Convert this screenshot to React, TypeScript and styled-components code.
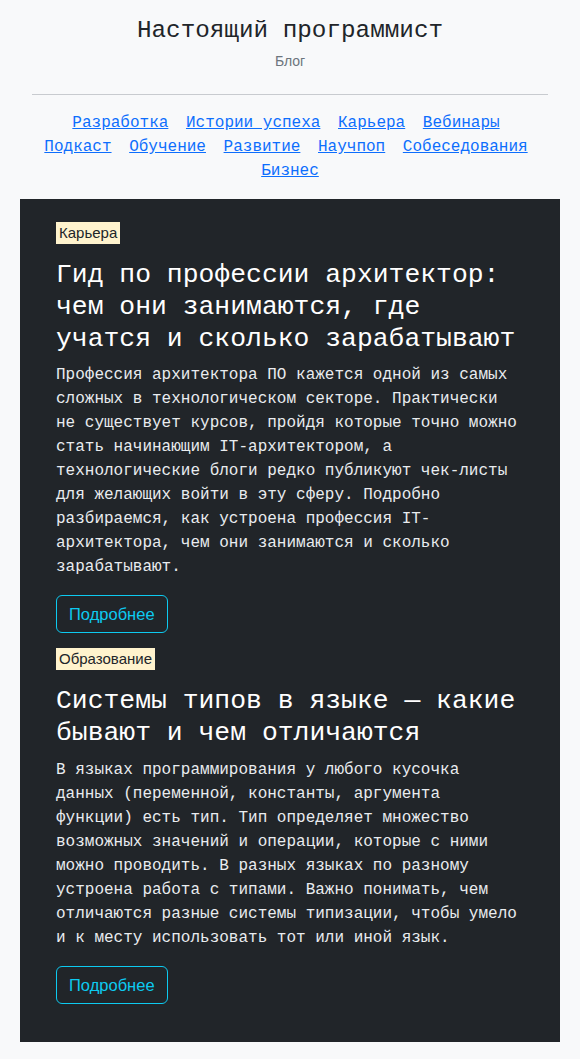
import { createGlobalStyle, styled } from 'styled-components';

const mono = `'Liberation Mono', 'DejaVu Sans Mono', monospace`;
const sans = `'Liberation Sans', Arial, sans-serif`;

const GlobalStyle = createGlobalStyle`
  * { box-sizing: border-box; }
  body {
    margin: 0;
    background-color: #f8f9fa;
    color: #212529;
    font-family: ${mono};
  }
`;

const Header = styled.header`
  padding: 16px 32px 0;
  text-align: center;
`;

const SiteTitle = styled.h1`
  margin: 0;
  font-family: ${mono};
  font-size: 24.3px;
  font-weight: 400;
  line-height: 1.2;
  color: #212529;
`;

const SiteSubtitle = styled.p`
  margin: 6px 0 0;
  font-family: ${sans};
  font-size: 14px;
  line-height: 1.5;
  color: #6c757d;
`;

const Divider = styled.hr`
  margin: 22px 0 16px;
  border: 0;
  border-top: 1px solid #c8cbcf;
`;

const Nav = styled.nav`
  text-align: center;
  font-size: 16px;
  line-height: 24px;
`;

const NavItem = styled.span`
  &:last-child a {
    margin-right: 0;
  }
`;

const NavLink = styled.a`
  margin-right: 8px;
  color: #0d6efd;
  text-decoration: underline;
`;

const Feed = styled.main`
  margin: 16px 20px 0;
  padding: 23px 36px;
  background-color: #212529;
`;

const Article = styled.article`
  margin-bottom: 15px;
`;

const TagRow = styled.div`
  display: flex;
`;

const Tag = styled.span`
  padding: 2px 3px;
  font-family: ${sans};
  font-size: 15px;
  line-height: 18px;
  color: #212529;
  background-color: #fff3cd;
`;

const Headline = styled.h2`
  margin: 16px 0 8px;
  font-family: ${mono};
  font-size: 26.4px;
  font-weight: 400;
  line-height: 31.7px;
  color: #ffffff;
`;

const Excerpt = styled.p`
  margin: 0 0 16px;
  font-size: 16px;
  line-height: 24px;
  color: #e9ecef;
`;

const MoreButton = styled.a`
  display: inline-block;
  padding: 6px 12px;
  font-family: ${sans};
  font-size: 16.5px;
  line-height: 24px;
  color: #0dcaf0;
  border: 1px solid #0dcaf0;
  border-radius: 6px;
  text-decoration: none;
  vertical-align: top;
`;

const links = [
  'Разработка',
  'Истории успеха',
  'Карьера',
  'Вебинары',
  'Подкаст',
  'Обучение',
  'Развитие',
  'Научпоп',
  'Собеседования',
  'Бизнес',
];

const posts = [
  {
    tag: 'Карьера',
    title: 'Гид по профессии архитектор: чем они занимаются, где учатся и сколько зарабатывают',
    text: 'Профессия архитектора ПО кажется одной из самых сложных в технологическом секторе. Практически не существует курсов, пройдя которые точно можно стать начинающим IT-архитектором, а технологические блоги редко публикуют чек-листы для желающих войти в эту сферу. Подробно разбираемся, как устроена профессия IT-архитектора, чем они занимаются и сколько зарабатывают.',
  },
  {
    tag: 'Образование',
    title: 'Системы типов в языке — какие бывают и чем отличаются',
    text: 'В языках программирования у любого кусочка данных (переменной, константы, аргумента функции) есть тип. Тип определяет множество возможных значений и операции, которые с ними можно проводить. В разных языках по разному устроена работа с типами. Важно понимать, чем отличаются разные системы типизации, чтобы умело и к месту использовать тот или иной язык.',
  },
];

const App = () => {
  return (
    <>
      <GlobalStyle />
      <Header>
        <SiteTitle>Настоящий программист</SiteTitle>
        <SiteSubtitle>Блог</SiteSubtitle>
        <Divider />
        <Nav>
          {links.map((l) => (
            <NavItem key={l}>
              <NavLink href="#">{l}</NavLink>{' '}
            </NavItem>
          ))}
        </Nav>
      </Header>
      <Feed>
        {posts.map((p) => (
          <Article key={p.tag}>
            <TagRow>
              <Tag>{p.tag}</Tag>
            </TagRow>
            <Headline>{p.title}</Headline>
            <Excerpt>{p.text}</Excerpt>
            <MoreButton href="#">Подробнее</MoreButton>
          </Article>
        ))}
      </Feed>
    </>
  );
};

export default App;
